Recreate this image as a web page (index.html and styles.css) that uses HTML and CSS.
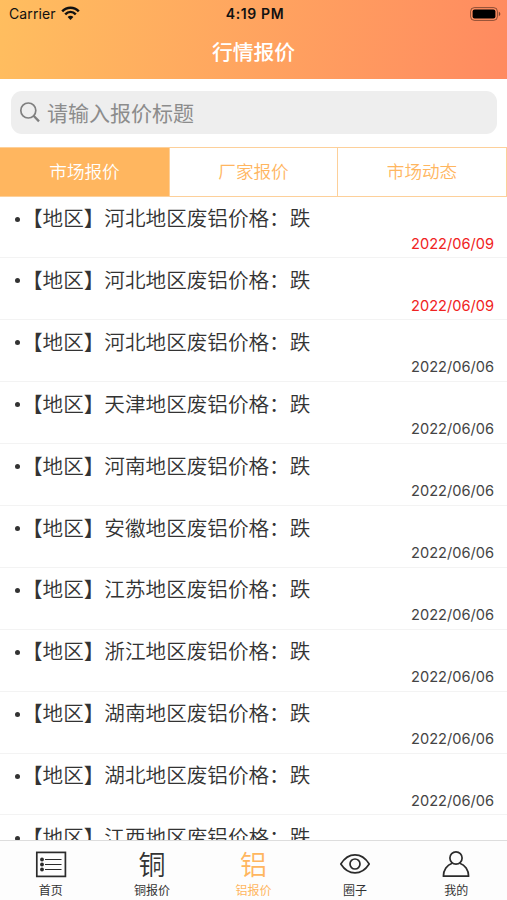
FILE: index.html
```html
<!DOCTYPE html>
<html lang="zh-CN">
<head>
<meta charset="UTF-8">
<meta name="viewport" content="width=device-width, initial-scale=1.0">
<title>行情报价</title>
<link rel="stylesheet" href="styles.css">
</head>
<body>
<div class="app">
    <header class="header">
        <div class="status-bar">
            <div class="carrier">
                <span>Carrier</span>
                <svg class="wifi" width="19" height="15" viewBox="0 0 19 15" fill="none" stroke="#111" stroke-width="2.5">
                    <path d="M1.2 5.3C6 .4 13 .4 17.8 5.3"/>
                    <path d="M4.2 8.4C7.3 5.3 11.7 5.3 14.8 8.4"/>
                    <path d="M6.6 11C8.2 9.3 10.8 9.3 12.4 11L9.5 13.9Z" fill="#111" stroke="none"/>
                </svg>
            </div>
            <div class="time">4:19 PM</div>
            <div class="power">
                <svg width="31" height="14" viewBox="0 0 31 14">
                    <rect x=".6" y=".6" width="26.8" height="12.8" rx="3.8" fill="none" stroke="#000" stroke-opacity=".45"/>
                    <rect x="2.6" y="2.6" width="22.8" height="8.8" rx="2" fill="#000"/>
                    <path d="M28.8 4.8C30.8 5.5 30.8 8.5 28.8 9.2Z" fill="#000" fill-opacity=".5"/>
                </svg>
            </div>
        </div>
        <h1>行情报价</h1>
    </header>

    <div class="search">
        <div class="search-box">
            <svg width="22" height="22" viewBox="0 0 22 22" fill="none" stroke="#7f7f7f">
                <circle cx="9.3" cy="9.5" r="7.5" stroke-width="1.7"/>
                <path d="M14.6 14.8L20 20.4" stroke-width="2.3"/>
            </svg>
            <span>请输入报价标题</span>
        </div>
    </div>

    <nav class="tabs">
        <a class="tab active">市场报价</a>
        <a class="tab">厂家报价</a>
        <a class="tab">市场动态</a>
    </nav>

    <ul class="price-list">
        <li><p>【地区】河北地区废铝价格：跌</p><time class="new">2022/06/09</time></li>
        <li><p>【地区】河北地区废铝价格：跌</p><time class="new">2022/06/09</time></li>
        <li><p>【地区】河北地区废铝价格：跌</p><time>2022/06/06</time></li>
        <li><p>【地区】天津地区废铝价格：跌</p><time>2022/06/06</time></li>
        <li><p>【地区】河南地区废铝价格：跌</p><time>2022/06/06</time></li>
        <li><p>【地区】安徽地区废铝价格：跌</p><time>2022/06/06</time></li>
        <li><p>【地区】江苏地区废铝价格：跌</p><time>2022/06/06</time></li>
        <li><p>【地区】浙江地区废铝价格：跌</p><time>2022/06/06</time></li>
        <li><p>【地区】湖南地区废铝价格：跌</p><time>2022/06/06</time></li>
        <li><p>【地区】湖北地区废铝价格：跌</p><time>2022/06/06</time></li>
        <li><p>【地区】江西地区废铝价格：跌</p></li>
    </ul>

    <footer class="tab-bar">
        <a class="bar-item">
            <svg class="icon" width="32" height="28" viewBox="0 0 32 28" fill="none" stroke="#2b2b2b">
                <rect x="1.8" y="1.4" width="28.6" height="24" stroke-width="1.7"/>
                <path d="M10 8.5H26.5M10 13.5H26.5M10 18.5H26.5" stroke-width="1.1"/>
                <g fill="#2b2b2b" stroke="none">
                    <circle cx="7" cy="8.5" r="1.9"/>
                    <circle cx="7" cy="13.5" r="1.9"/>
                    <circle cx="7" cy="18.5" r="1.9"/>
                </g>
            </svg>
            <span>首页</span>
        </a>
        <a class="bar-item">
            <b class="icon">铜</b>
            <span>铜报价</span>
        </a>
        <a class="bar-item active">
            <b class="icon">铝</b>
            <span>铝报价</span>
        </a>
        <a class="bar-item">
            <svg class="icon" width="32" height="28" viewBox="0 0 32 28" fill="none" stroke="#2b2b2b" stroke-width="1.7">
                <path d="M1.8 13C9.5 .9 22.5 .9 30.2 13C22.5 24.9 9.5 24.9 1.8 13Z" stroke-linejoin="round"/>
                <circle cx="16" cy="13" r="5"/>
            </svg>
            <span>圈子</span>
        </a>
        <a class="bar-item">
            <svg class="icon" width="32" height="28" viewBox="0 0 32 28" fill="none" stroke="#2b2b2b" stroke-width="1.7">
                <circle cx="16" cy="7" r="6.1"/>
                <path d="M12.2 12.2C7 13.8 3.4 19 3.4 25.2H28.6C28.6 19 25 13.8 19.8 12.2" stroke-linejoin="round"/>
            </svg>
            <span>我的</span>
        </a>
    </footer>
</div>
</body>
</html>
```

FILE: styles.css
```css
* {
    box-sizing: border-box;
}
body {
    margin: 0;
    font-family: Inter, "Noto Sans CJK SC", sans-serif;
    color: #333;
    background: #fff;
}
.app {
    display: flex;
    flex-direction: column;
    height: 100vh;
    overflow: hidden;
}

/* 顶部 */
.header {
    flex: none;
    height: 79px;
    background: linear-gradient(100deg, #ffbe5f, #ff8a60);
}
.status-bar {
    display: grid;
    grid-template-columns: 1fr auto 1fr;
    align-items: center;
    height: 27px;
    padding: 0 6px 0 9px;
    font-size: 14px;
    color: #111;
}
.carrier {
    display: flex;
    align-items: center;
    gap: 5px;
    letter-spacing: 0.1px;
}
.time {
    font-weight: 600;
    letter-spacing: 0.6px;
}
.power {
    display: flex;
    justify-content: flex-end;
}
.header h1 {
    margin: 0;
    font-size: 20.8px;
    font-weight: 500;
    line-height: 51px;
    text-align: center;
    color: #fff;
}

/* 搜索 */
.search {
    flex: none;
    height: 68px;
    padding: 12px 10px 0 11px;
}
.search-box {
    display: flex;
    align-items: center;
    gap: 6px;
    height: 43px;
    padding: 0 0 1px 8px;
    border-radius: 11px;
    background: #eee;
    font-size: 21px;
    color: #8c8c8c;
}

/* 分类标签 */
.tabs {
    display: grid;
    grid-template-columns: 169px 168px 1fr;
    flex: none;
    height: 49.5px;
    border: 1px solid #fdd09a;
    border-left: 0;
}
.tab {
    font-size: 17.6px;
    font-weight: 350;
    line-height: 48px;
    text-align: center;
    color: #ffb65f;
}
.tab + .tab {
    border-left: 1px solid #fdd09a;
}
.tab.active {
    background: #ffb65f;
    color: #fff;
}

/* 报价列表 */
.price-list {
    flex: 1;
    min-height: 0;
    margin: 0;
    padding: 0;
    overflow: hidden;
    list-style: none;
}
.price-list li {
    display: flex;
    flex-direction: column;
    height: 61.9px;
    padding: 5.6px 13px 0 15px;
    border-bottom: 1px solid #f3f3f3;
}
.price-list p {
    display: flex;
    align-items: center;
    gap: 2px;
    margin: 0;
    font-family: "Noto Sans CJK SC", sans-serif;
    font-size: 20.6px;
    font-weight: 350;
    line-height: 30px;
}
.price-list p::before {
    content: "";
    width: 5px;
    height: 5px;
    margin-top: 4px;
    border-radius: 50%;
    background: #333;
}
.price-list time {
    align-self: flex-end;
    margin-top: 1.6px;
    font-size: 14.6px;
    line-height: 20px;
    color: #444;
}
.price-list time.new {
    color: #f02222;
}

/* 底部导航 */
.tab-bar {
    display: flex;
    flex: none;
    height: 60px;
    padding-top: 10px;
    border-top: 1px solid #ddd;
    background: #fdfdfd;
}
.bar-item {
    display: flex;
    flex: 1;
    flex-direction: column;
    align-items: center;
    gap: 3px;
    font-size: 12px;
    line-height: 18px;
}
.icon {
    flex: none;
    height: 28px;
}
b.icon {
    font-size: 27px;
    font-weight: 350;
    line-height: 29px;
}
.bar-item.active {
    color: #ffb65f;
}
```
